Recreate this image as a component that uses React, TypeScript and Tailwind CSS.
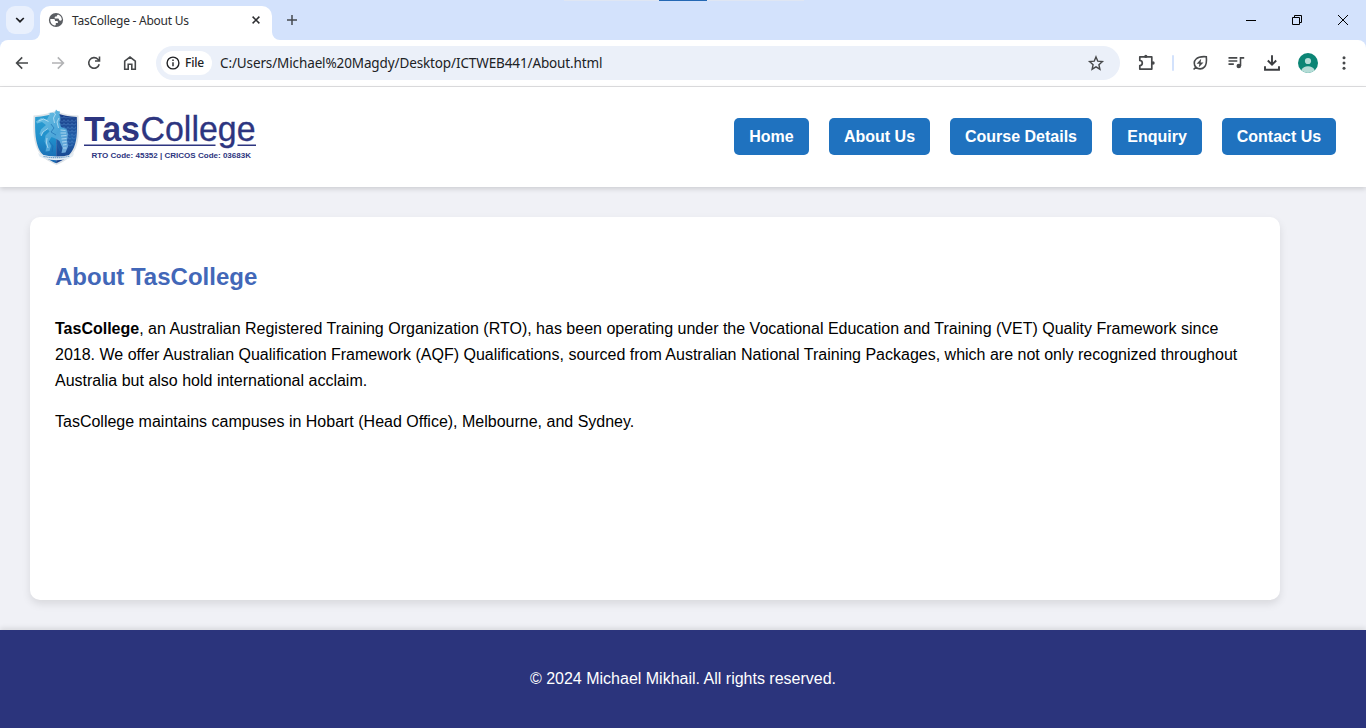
import React from "react";

const iconBox = "flex h-9 w-9 shrink-0 items-center justify-center";

function Line({ d, color = "#46484a", w = 1.6 }: { d: string; color?: string; w?: number }) {
  return (
    <svg width="18" height="18" viewBox="0 0 18 18" fill="none" stroke={color} strokeWidth={w}>
      <path d={d} />
    </svg>
  );
}

function TabStrip() {
  return (
    <div className="relative flex h-10 bg-[#d3e2fc]">
      <div className="absolute left-[564px] top-0 h-px w-[240px] bg-[#dfe6f3]" />
      <div className="absolute left-[659px] top-0 h-px w-12 bg-[#2468b4]" />
      <div className="ml-1.5 mt-1.5 flex h-7 w-7 items-center justify-center rounded-[9px] bg-[#e9f0fd]">
        <svg width="10" height="8" viewBox="0 0 10 8" fill="none" stroke="#1f2023" strokeWidth="1.7">
          <path d="M1.2 2 5 5.7 8.8 2" />
        </svg>
      </div>
      <div className="relative ml-1.5 mt-1.5 flex h-[34px] w-[232px] items-center rounded-t-[10px] bg-white pb-1.5 pl-2">
        <svg className="absolute -left-2 bottom-0" width="8" height="8" viewBox="0 0 8 8">
          <path d="M8 0v8H0A8 8 0 0 0 8 0Z" fill="#fff" />
        </svg>
        <svg className="absolute -right-2 bottom-0" width="8" height="8" viewBox="0 0 8 8">
          <path d="M0 0v8h8A8 8 0 0 1 0 0Z" fill="#fff" />
        </svg>
        <svg width="16" height="16" viewBox="0 0 16 16">
          <circle cx="8" cy="8" r="7.1" fill="#5b5e63" />
          <path
            d="M2.3 7.1h3.1c1 0 1.6.5 1.6 1.4v.6h1.9c.7 0 1 .4 1 1v.8H7.8v1.5c0 .6-.6.9-1.2 1.2A5.8 5.8 0 0 1 2.3 7.1ZM10.6 2.8A5.8 5.8 0 0 1 13.8 8c-.5.4-1 .7-1.6.7-.8 0-1.2-.5-1.2-1.2 0-.6-.4-.9-1-.9H7.5c-.6 0-.9-.4-.9-.9 0-.9.6-1.3 1.4-1.3h.7c0-1.1.7-1.6 1.9-1.6Z"
            fill="#fff"
          />
        </svg>
        <span className="ml-2 w-[118px] whitespace-nowrap pt-0.5 font-['Noto_Sans','Open_Sans',sans-serif] text-[12px] leading-4 tracking-[-0.25px] text-[#2c2d30]">
          TasCollege - About Us
        </span>
        <svg className="ml-[62px]" width="8" height="8" viewBox="0 0 8 8" stroke="#2d2e31" strokeWidth="1.5">
          <path d="m.6.6 6.8 6.8M7.4.6.6 7.4" />
        </svg>
      </div>
      <svg className="ml-[15px] mt-[15px]" width="10" height="10" viewBox="0 0 10 10" stroke="#45494f" strokeWidth="1.5">
        <path d="M5 0v10M0 5h10" />
      </svg>
      <div className="ml-auto flex h-10 text-black">
        <div className="flex w-[46px] items-center justify-center">
          <svg width="10" height="10" viewBox="0 0 10 10" stroke="currentColor">
            <path d="M0 5.5h10" />
          </svg>
        </div>
        <div className="flex w-[46px] items-center justify-center">
          <svg width="10" height="10" viewBox="0 0 10 10" fill="none" stroke="currentColor">
            <path d="M.5 2.5h7v7h-7zM2.5 2.5v-2h7v7h-2" />
          </svg>
        </div>
        <div className="flex w-[46px] items-center justify-center">
          <svg width="10" height="10" viewBox="0 0 10 10" stroke="currentColor">
            <path d="m0 0 10 10M10 0 0 10" />
          </svg>
        </div>
      </div>
    </div>
  );
}

function Toolbar() {
  return (
    <div className="bg-[#d3e2fc]">
      <div className="flex h-[47px] items-center rounded-t-[8px] border-b border-[#dfdfe1] bg-white pl-1 pr-1">
        <div className={iconBox}>
          <Line d="M15 9H3.8M9.2 3.4 3.6 9l5.6 5.6" />
        </div>
        <div className={iconBox}>
          <Line d="M3 9h11.2M8.8 3.4 14.4 9l-5.6 5.6" color="#b2b3b5" />
        </div>
        <div className={iconBox}>
          <Line d="M14.2 10.2A5.3 5.3 0 1 1 12.9 5.3L14.3 6.7M14.5 2.6V7H10" />
        </div>
        <div className={iconBox}>
          <Line d="M3.7 7.2 9 3.1l5.3 4.1v8.1h-3.5v-5H7.2v5H3.7Z" />
        </div>
        <div className="ml-2 flex h-[34px] w-[964px] items-center rounded-full bg-[#ebf0f9] pl-[5px]">
          <div className="flex h-6 w-[51px] items-center rounded-full bg-white pl-[5px] text-[#202225]">
            <svg width="14" height="14" viewBox="0 0 14 14" fill="none" stroke="currentColor" strokeWidth="1.4">
              <circle cx="7" cy="7" r="5.9" />
              <path d="M7 6.3v4M7 3.6V5" />
            </svg>
            <span className="ml-[5px] whitespace-nowrap font-['Noto_Sans','Open_Sans',sans-serif] text-[12px] font-medium leading-4 tracking-[-0.2px]">
              File
            </span>
          </div>
          <span className="ml-2 whitespace-nowrap font-['Noto_Sans','Open_Sans',sans-serif] text-[13.5px] leading-5 tracking-[-0.12px] text-[#202225]">
            C:/Users/Michael%20Magdy/Desktop/ICTWEB441/About.html
          </span>
          <div className="ml-auto mr-[6px] flex h-9 w-9 items-center justify-center">
            <Line d="m9 2.9 1.8 4.3 4.6.4-3.5 3.1 1 4.5L9 12.8l-3.9 2.4 1-4.5-3.5-3.1 4.6-.4Z" w={1.4} />
          </div>
        </div>
        <div className={iconBox + " ml-2"}>
          <svg width="18" height="18" viewBox="0 0 18 18" fill="none" stroke="#46484a" strokeWidth="1.7" strokeLinejoin="round">
            <path d="M2.8 2.9h12v12.2h-12v-3.6a2.5 2.5 0 0 0 0-5Z" />
            <circle cx="8.8" cy="2.3" r="1.6" fill="#46484a" stroke="none" />
            <circle cx="16" cy="9" r="1.7" fill="#46484a" stroke="none" />
          </svg>
        </div>
        <div className="ml-2 mr-2 h-4 w-0.5 rounded-full bg-[#d3e2fc]" />
        <div className={iconBox}>
          <svg width="18" height="18" viewBox="0 0 18 18" fill="none" stroke="#46484a" strokeWidth="1.6">
            <path d="M15.3 2.7c.5 4.9.1 8.3-1.8 10.2a5.9 5.9 0 0 1-8.6.2 5.6 5.6 0 0 1 .2-8.1c2-2 5.3-2.7 10.2-2.3ZM5 13l-2.4 2.5" />
            <path d="m10.2 4.8-4.6 4.9h2.8l-.6 3.6 4.7-4.9H9.6Z" fill="#46484a" stroke="none" />
          </svg>
        </div>
        <div className={iconBox}>
          <svg width="18" height="18" viewBox="0 0 18 18" fill="none" stroke="#46484a" strokeWidth="1.6">
            <path d="M1.5 3.9h8.8M1.5 7h8.8M1.5 10.1h5.3M13.5 12V3.9h3.7" />
            <circle cx="11.8" cy="12" r="2.3" fill="#46484a" stroke="none" />
          </svg>
        </div>
        <div className={iconBox}>
          <svg width="18" height="18" viewBox="0 0 18 18" fill="none" stroke="#3b3d40" strokeWidth="1.9">
            <path d="M9 1.2v9.2M4.8 6.5 9 10.7l4.2-4.2M2 12.3v3.5h14v-3.5" />
          </svg>
        </div>
        <div className={iconBox}>
          <svg width="20" height="20" viewBox="0 0 20 20">
            <circle cx="10" cy="10" r="10" fill="#0b8575" />
            <circle cx="10" cy="8" r="3.1" fill="#b4dcd6" />
            <path d="M3.2 17.3C4.5 14.7 7 13.2 10 13.2s5.5 1.5 6.8 4.1A10 10 0 0 1 3.2 17.3Z" fill="#b4dcd6" />
          </svg>
        </div>
        <div className={iconBox}>
          <svg width="4" height="16" viewBox="0 0 4 16" fill="#46484a">
            <circle cx="2" cy="2.7" r="1.5" />
            <circle cx="2" cy="8" r="1.5" />
            <circle cx="2" cy="13.3" r="1.5" />
          </svg>
        </div>
      </div>
    </div>
  );
}

function Logo() {
  return (
    <svg className="overflow-visible" width="230" height="64" viewBox="30 105 230 64" fontFamily="'Liberation Sans', Arial, sans-serif">
      <defs>
        <linearGradient id="shieldLeft" x1="0" y1="0" x2="0" y2="1">
          <stop offset="0" stopColor="#2e9fd2" />
          <stop offset="0.5" stopColor="#2090cc" />
          <stop offset="1" stopColor="#1a66b0" />
        </linearGradient>
        <linearGradient id="shieldRight" x1="0" y1="0" x2="0" y2="1">
          <stop offset="0" stopColor="#1a3a85" />
          <stop offset="0.5" stopColor="#2360aa" />
          <stop offset="1" stopColor="#15408a" />
        </linearGradient>
        <linearGradient id="beast" x1="0" y1="0" x2="1" y2="1">
          <stop offset="0" stopColor="#72c6e6" />
          <stop offset="0.6" stopColor="#4ba5d8" />
          <stop offset="1" stopColor="#75a9db" />
        </linearGradient>
        <pattern id="scales" width="4" height="3.5" patternUnits="userSpaceOnUse">
          <path d="M0 .5a2 2 0 0 0 4 0" fill="none" stroke="#5e99d4" strokeWidth=".7" opacity=".6" />
        </pattern>
      </defs>
      <path d="M33.5 115.5q11-.8 19-3.600 4-1.600 6 0 8 3 20 3.600c.8 18 .5 28-4.500 36-4 7-10 10-17.500 13.500-8-3.500-14-7-18-13.500-5-9-5.700-20-5-36Z" fill="#dde3e8" />
      <path d="M35.2 117q12-.8 21-4v50.300c-8-3.500-13-7-16.700-13-4-8-4.800-18-4.300-33.300Z" fill="url(#shieldLeft)" />
      <path d="M56.2 113q9 3.600 20.600 4c.7 16 0 26-4.300 33.300-3.600 6-9 10-16.300 13Z" fill="url(#shieldRight)" />
      <path d="M57 114q9 3.200 19 3.800c.5 12 0 20-2 27L64 150Z" fill="url(#scales)" />
      <path
        d="M55 112.500 56 109.500l1.500 1.500 2.500.5-.5 3 1 4.500-1 3 1.500 5 5.500 2 1.500 5-1 6.500 1 6-2.500 6-4 .5 1-5-3-7-3-2-5-2-2.500 4 2 5-1.500 5-4 .5 1-5-2-5 1-6 4-4-2-3-4 3-2 4-2-1.500 1.500-4.500 5-4.500-4-3-5 1.500-1-2 5-3.500 6 1.500 3-6-2-.5Z"
        fill="url(#beast)"
      />
      <path
        d="m53 112 2.500 2-2 4 1 5M38.500 121l5-2 5 2.500M41 136l2-4 5-3.500M47 138l-.5 5 1.500 5M59 118l-2 4 1.500 6M60.500 130l5 .5M60.500 133l5.500 0M61 136l5.500-.5M61.500 139l5-.5M62 142l4.500-.5M63 145l3.500-.5M63 148l3.500 0"
        fill="none"
        stroke="#c9e8f6"
        strokeWidth=".9"
        opacity=".8"
      />
      <path d="m51 124 3 4-3 4 5 3M49 141l4 5-1 6M57 143l3 8M69 131l3 9" fill="none" stroke="#1a68ae" strokeWidth=".9" opacity=".7" />
      <path d="m38 153 3.500 1.500q14 4 29 .2l3.500-1.700-1 3.300-4 2.200q-12 3.500-25 0l-4.500-2Z" fill="#e4edf4" />
      <path d="M43.500 156.300q13 3 26-.3" fill="none" stroke="#6d9cc6" strokeWidth="1.2" strokeDasharray="1.300 .6" />
      <g fill="#2d3580">
        <text x="84" y="140.5" fontSize="35" fontWeight="700" textLength="56" lengthAdjust="spacingAndGlyphs">Tas</text>
        <text x="140.5" y="140.5" fontSize="35" stroke="#2d3580" strokeWidth=".3" textLength="115" lengthAdjust="spacingAndGlyphs">College</text>
        <path d="M84 144.600h131.500v1.500H84ZM237.500 144.600H256v1.500h-18.500Z" />
        <text x="91.5" y="157.7" fontSize="7.6" fontWeight="700" textLength="159.5" lengthAdjust="spacingAndGlyphs">RTO Code: 45352 | CRICOS Code: 03683K</text>
      </g>
    </svg>
  );
}

const navItems = [
  { label: "Home", width: "w-[75px]" },
  { label: "About Us", width: "w-[101px]" },
  { label: "Course Details", width: "w-[142px]" },
  { label: "Enquiry", width: "w-[90px]" },
  { label: "Contact Us", width: "w-[114px]" },
];

export default function App() {
  return (
    <div className="flex h-[728px] w-[1366px] flex-col overflow-hidden bg-[#f0f1f6] font-['Liberation_Sans',Arial,sans-serif] text-base text-black">
      <TabStrip />
      <Toolbar />
      <header className="z-10 flex h-[100px] shrink-0 items-center justify-between bg-white px-[30px] shadow-[0_2px_5px_rgba(0,0,0,0.15)]">
        <Logo />
        <nav className="mb-0.5 flex gap-5">
          {navItems.map((item) => (
            <a key={item.label} className={"flex h-[37px] items-center justify-center whitespace-nowrap rounded-[5px] bg-[#1f72bf] pt-px font-bold text-white " + item.width}>
              {item.label}
            </a>
          ))}
        </nav>
      </header>
      <main className="flex-1 p-[30px]">
        <section className="h-[383px] w-[1250px] rounded-[10px] bg-white px-[25px] pt-[41px] shadow-[0_4px_8px_rgba(0,0,0,0.1)]">
          <h1 className="text-2xl font-bold leading-[38px] text-[#4267b8]">About TasCollege</h1>
          <p className="mt-5 whitespace-nowrap leading-[26px]">
            <strong>TasCollege</strong>, an Australian Registered Training Organization (RTO), has been operating under the Vocational Education and Training (VET) Quality Framework since
            <br />
            2018. We offer Australian Qualification Framework (AQF) Qualifications, sourced from Australian National Training Packages, which are not only recognized throughout
            <br />
            Australia but also hold international acclaim.
          </p>
          <p className="mt-[15px] leading-[26px]">TasCollege maintains campuses in Hobart (Head Office), Melbourne, and Sydney.</p>
        </section>
      </main>
      <footer className="flex h-[98px] shrink-0 items-center justify-center bg-[#2b347c] text-white shadow-[0_-2px_5px_rgba(0,0,0,0.1)]">
        © 2024 Michael Mikhail. All rights reserved.
      </footer>
    </div>
  );
}
